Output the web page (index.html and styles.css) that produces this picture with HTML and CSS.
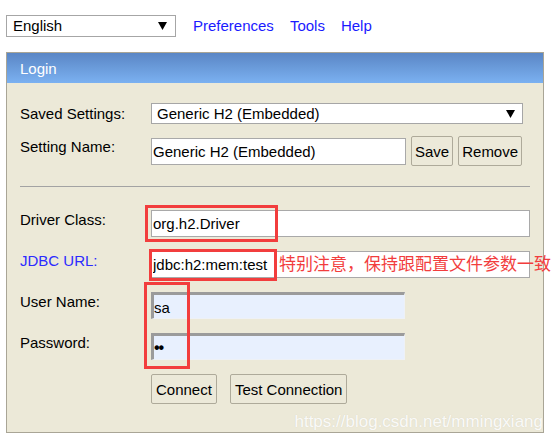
FILE: index.html
```html
<!DOCTYPE html>
<html lang="en">
<head>
<meta charset="utf-8">
<title>H2 Console Login</title>
<link rel="stylesheet" href="styles.css">
</head>
<body>
<div class="page">
  <div class="topbar">
    <div class="select lang-select">
      <span>English</span>
      <svg class="arrow" width="9" height="9" viewBox="0 0 9 9"><polygon points="0,1 9,1 4.5,9" fill="#000"/></svg>
    </div>
    <nav class="links">
      <a href="#">Preferences</a>
      <a href="#">Tools</a>
      <a href="#">Help</a>
    </nav>
  </div>

  <div class="panel">
    <div class="panel-head">Login</div>
    <div class="panel-body">
      <div class="form-grid grid-top">
        <div class="label">Saved Settings:</div>
        <div class="select saved-select">
          <span>Generic H2 (Embedded)</span>
          <svg class="arrow" width="9" height="9" viewBox="0 0 9 9"><polygon points="0,1 9,1 4.5,9" fill="#000"/></svg>
        </div>
        <div class="label">Setting Name:</div>
        <div class="name-row">
          <input class="field name-field" type="text" value="Generic H2 (Embedded)">
          <button class="btn">Save</button>
          <button class="btn">Remove</button>
        </div>
      </div>
      <hr class="divider">
      <div class="form-grid grid-main">
        <div class="label">Driver Class:</div>
        <input class="field wide" type="text" value="org.h2.Driver">
        <div class="label link-label">JDBC URL:</div>
        <input class="field wide" type="text" value="jdbc:h2:mem:test">
        <div class="label">User Name:</div>
        <input class="field auto" type="text" value="sa">
        <div class="label">Password:</div>
        <input class="field auto pw" type="text" value="••">
        <div></div>
        <div class="actions">
          <button class="btn">Connect</button>
          <button class="btn">Test Connection</button>
        </div>
      </div>
    </div>
    <div class="mark mark-driver"></div>
    <div class="mark mark-url"></div>
    <div class="mark mark-user"></div>
    <div class="note">特别注意，保持跟配置文件参数一致</div>
    <div class="watermark">https://blog.csdn.net/mmingxiang</div>
  </div>
</div>
</body>
</html>
```
FILE: styles.css
```css
* { box-sizing: border-box; }
html, body { margin: 0; background: #fff; }
body {
  font-family: "Liberation Sans", Arial, sans-serif;
  font-size: 15px;
  color: #000;
  overflow: hidden;
}
.page { padding: 15px 0 0 6px; width: 551px; }

.topbar { display: flex; align-items: center; height: 22px; }
.select {
  display: flex;
  align-items: center;
  justify-content: space-between;
  background: #fff;
  border: 1px solid #a6a6a6;
  white-space: nowrap;
}
.lang-select { width: 170px; height: 22px; padding: 0 8px 1px 6px; }
.arrow { display: block; }
.links { display: flex; gap: 16px; margin-left: 17px; margin-top: -1px; }
.links a { color: #1a1aff; text-decoration: none; }

.panel {
  position: relative;
  margin-top: 15px;
  width: 538px;
  border: 1px solid #a9a596;
  background: #ece9d8;
}
.panel-head {
  height: 30px;
  line-height: 31px;
  padding-left: 13px;
  color: #fff;
  background: linear-gradient(#5a86c5, #7bb1f1);
}
.panel-body { padding: 20px 0 28px 13px; }

.form-grid {
  display: grid;
  grid-template-columns: 131px auto;
  align-items: start;
  justify-items: start;
}
.grid-top { row-gap: 12px; }
.grid-main { row-gap: 14px; }
.label { padding-top: 2px; line-height: 17px; white-space: nowrap; }
.grid-main .label { padding-top: 1px; }
.link-label { color: #2b2bff; }

.saved-select { width: 372px; height: 21px; padding: 0 7px 0 5px; }

.name-row { display: flex; align-items: center; gap: 5px; }

.field {
  height: 27px;
  font-family: "Liberation Sans", Arial, sans-serif;
  font-size: 15px;
  color: #000;
  padding: 0 1px;
  border: 1px solid #a9a9a9;
  background: #fff;
  outline: none;
}
.name-field { width: 255px; }
.wide { width: 379px; }
.auto {
  width: 254px;
  padding: 1px 0 0 0;
  background: #e8f0fe;
  border-style: solid;
  border-width: 3px 1px 1px 3px;
  border-color: #9b9b9b #eef1f6 #eef1f6 #9b9b9b;
}
.pw { font-size: 16px; font-weight: bold; letter-spacing: -1px; }

.btn {
  height: 30px;
  padding: 0 3px;
  font-family: "Liberation Sans", Arial, sans-serif;
  font-size: 15px;
  color: #000;
  background: #ece9d9;
  border: 1px solid #aeaa9a;
  border-radius: 2px;
}
.actions { display: flex; gap: 13px; }
.actions .btn { padding: 0 4px; }

.divider {
  margin: 20px 13px 23px 0;
  border: 0;
  border-top: 1px solid #a3a3a3;
  height: 0;
}

.mark { position: absolute; border: 3px solid #f23d3d; }
.mark-driver { left: 138px; top: 152px; width: 133px; height: 37px; }
.mark-url { left: 142px; top: 196px; width: 128px; height: 32px; }
.mark-user { left: 137px; top: 229px; width: 46px; height: 87px; }
.note {
  position: absolute;
  left: 272px;
  top: 200px;
  font-family: "Noto Sans CJK SC", sans-serif;
  font-size: 17px;
  line-height: 20px;
  color: #f23d3d;
  white-space: nowrap;
}
.watermark {
  position: absolute;
  right: 0;
  bottom: 1px;
  font-family: "Liberation Sans", Arial, sans-serif;
  font-size: 17px;
  line-height: 19px;
  color: rgba(255, 255, 255, 0.9);
  text-shadow: 0 0 1px rgba(120, 120, 110, 0.2);
  white-space: nowrap;
}
```
